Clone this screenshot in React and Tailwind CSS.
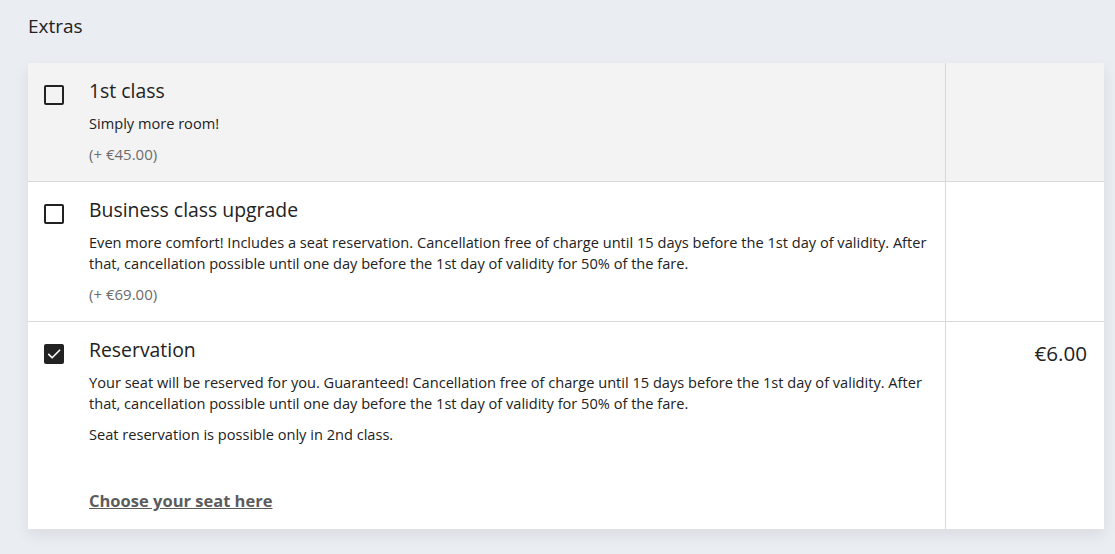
import React from 'react';

function Checkbox({ checked }) {
    if (checked) {
        return (
            <div className="w-5 h-5 rounded-[2px] bg-[#222222] flex items-center justify-center">
                <svg className="w-[18px] h-[18px] text-white" fill="none" stroke="currentColor" viewBox="0 0 24 24">
                    <path strokeLinecap="round" strokeLinejoin="round" strokeWidth={2.2} d="M5 12.5l4.5 4.5L19.5 7" />
                </svg>
            </div>
        );
    }
    return <div className="w-5 h-5 rounded-[2px] border-2 border-[#222222] bg-transparent" />;
}

function ExtraRow({ checked, title, children, price, muted, last }) {
    return (
        <div className={`flex ${muted ? 'bg-[#f3f3f3]' : 'bg-white'} ${last ? '' : 'border-b border-[#d9d9d9]'}`}>
            <div className="flex-1 flex border-r border-[#d9d9d9]">
                <div className="w-[61px] pl-4 pt-[22px] shrink-0">
                    <Checkbox checked={checked} />
                </div>
                <div className="flex-1 pt-[14px] pb-[16px] pr-4">
                    <h3 className="text-[19.4px] leading-[28px] text-[#222222] mb-[8px]">{title}</h3>
                    {children}
                </div>
            </div>
            <div className="w-[158px] shrink-0 pt-[17px] pr-[17px] text-right text-[20.6px] leading-[28px] text-[#222222]">
                {price}
            </div>
        </div>
    );
}

export default function App() {
    return (
        <div className="min-h-screen bg-[#eaedf2] pl-7 pr-[11px] pt-[12px] pb-7 font-['Open_Sans',sans-serif] text-[#222222]">
            <h2 className="text-[19px] leading-[28px] mb-[23px]">Extras</h2>

            <div className="bg-white shadow-[0_6px_14px_rgba(0,0,0,0.08)]">
                <ExtraRow title="1st class" muted>
                    <p className="text-[14.6px] leading-[21px]">Simply more room!</p>
                    <p className="text-[15px] leading-[21px] text-[#6b6b6b] mt-[10px]">(+ €45.00)</p>
                </ExtraRow>

                <ExtraRow title="Business class upgrade">
                    <p className="text-[14.6px] leading-[21px]">
                        Even more comfort! Includes a seat reservation. Cancellation free of charge until 15 days before the 1st day of validity. After that, cancellation possible until one day before the 1st day of validity for 50% of the fare.
                    </p>
                    <p className="text-[15px] leading-[21px] text-[#6b6b6b] mt-[10px]">(+ €69.00)</p>
                </ExtraRow>

                <ExtraRow title="Reservation" checked price="€6.00" last>
                    <p className="text-[14.6px] leading-[21px]">
                        Your seat will be reserved for you. Guaranteed! Cancellation free of charge until 15 days before the 1st day of validity. After that, cancellation possible until one day before the 1st day of validity for 50% of the fare.
                    </p>
                    <p className="text-[14.6px] leading-[21px] mt-[10px]">Seat reservation is possible only in 2nd class.</p>
                    <a href="#" className="inline-block mt-[44px] text-[16.5px] leading-[24px] font-bold text-[#5c5c5c] underline">
                        Choose your seat here
                    </a>
                </ExtraRow>
            </div>
        </div>
    );
}
